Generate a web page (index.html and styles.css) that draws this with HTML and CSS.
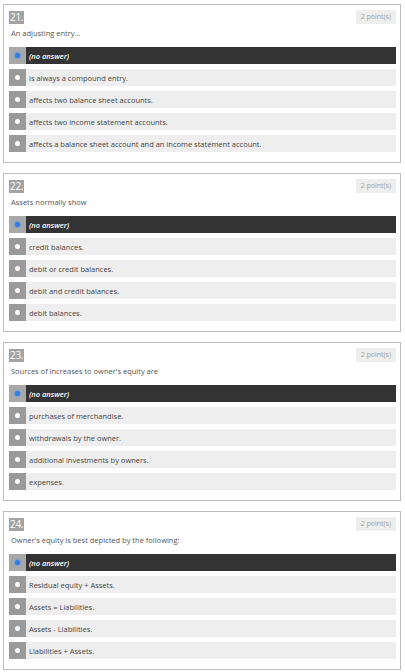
FILE: index.html
```html
<!DOCTYPE html>
<html>
<head>
<meta charset="utf-8">
<link rel="stylesheet" href="styles.css">
</head>
<body>
<div class="page">
  <div class="card">
    <div class="head"><span class="num">21.</span><span class="pts">2 point(s)</span></div>
    <div class="q">An adjusting entry...</div>
    <div class="opts">
      <div class="opt sel"><span class="ic"><span class="dot"></span></span><span class="tx">(no answer)</span></div>
      <div class="opt"><span class="ic"><span class="dot"></span></span><span class="tx">is always a compound entry.</span></div>
      <div class="opt"><span class="ic"><span class="dot"></span></span><span class="tx">affects two balance sheet accounts.</span></div>
      <div class="opt"><span class="ic"><span class="dot"></span></span><span class="tx">affects two income statement accounts.</span></div>
      <div class="opt"><span class="ic"><span class="dot"></span></span><span class="tx">affects a balance sheet account and an income statement account.</span></div>
    </div>
  </div>
  <div class="card">
    <div class="head"><span class="num">22.</span><span class="pts">2 point(s)</span></div>
    <div class="q">Assets normally show</div>
    <div class="opts">
      <div class="opt sel"><span class="ic"><span class="dot"></span></span><span class="tx">(no answer)</span></div>
      <div class="opt"><span class="ic"><span class="dot"></span></span><span class="tx">credit balances.</span></div>
      <div class="opt"><span class="ic"><span class="dot"></span></span><span class="tx">debit or credit balances.</span></div>
      <div class="opt"><span class="ic"><span class="dot"></span></span><span class="tx">debit and credit balances.</span></div>
      <div class="opt"><span class="ic"><span class="dot"></span></span><span class="tx">debit balances.</span></div>
    </div>
  </div>
  <div class="card">
    <div class="head"><span class="num">23.</span><span class="pts">2 point(s)</span></div>
    <div class="q">Sources of increases to owner's equity are</div>
    <div class="opts">
      <div class="opt sel"><span class="ic"><span class="dot"></span></span><span class="tx">(no answer)</span></div>
      <div class="opt"><span class="ic"><span class="dot"></span></span><span class="tx">purchases of merchandise.</span></div>
      <div class="opt"><span class="ic"><span class="dot"></span></span><span class="tx">withdrawals by the owner.</span></div>
      <div class="opt"><span class="ic"><span class="dot"></span></span><span class="tx">additional investments by owners.</span></div>
      <div class="opt"><span class="ic"><span class="dot"></span></span><span class="tx">expenses.</span></div>
    </div>
  </div>
  <div class="card">
    <div class="head"><span class="num">24.</span><span class="pts">2 point(s)</span></div>
    <div class="q">Owner's equity is best depicted by the following:</div>
    <div class="opts">
      <div class="opt sel"><span class="ic"><span class="dot"></span></span><span class="tx">(no answer)</span></div>
      <div class="opt"><span class="ic"><span class="dot"></span></span><span class="tx">Residual equity + Assets.</span></div>
      <div class="opt"><span class="ic"><span class="dot"></span></span><span class="tx">Assets = Liabilities.</span></div>
      <div class="opt"><span class="ic"><span class="dot"></span></span><span class="tx">Assets - Liabilities.</span></div>
      <div class="opt"><span class="ic"><span class="dot"></span></span><span class="tx">Liabilities + Assets.</span></div>
    </div>
  </div>
</div>
</body>
</html>
```
FILE: styles.css
```css
html, body {
  margin: 0;
  padding: 0;
  background: #fff;
}
body {
  font-family: "Open Sans", "Liberation Sans", sans-serif;
  color: #555;
}
.page {
  width: 398px;
  padding: 4px 0 0 3px;
  display: flex;
  flex-direction: column;
  gap: 10px;
}
.card {
  border: 1px solid #bdbdbd;
  padding: 5px 4px 10px 5px;
  height: 157px;
  box-sizing: border-box;
  height: 159px;
}
.head {
  display: flex;
  justify-content: space-between;
  align-items: flex-start;
  height: 14px;
}
.num {
  background: #a3a3a3;
  color: #fff;
  font-size: 10px;
  line-height: 13px;
  height: 13px;
  padding: 0 1px 0 1px;
  letter-spacing: -0.3px;
  margin-top: 1px;
}
.pts {
  background: #eeeeee;
  color: #a0a0a0;
  font-size: 7px;
  line-height: 14px;
  height: 14px;
  padding: 0 5px;
  margin-right: 0;
}
.q {
  margin-top: 3px;
  font-size: 7.5px;
  line-height: 12px;
  height: 12px;
  color: #555;
  padding-left: 2px;
}
.opts {
  margin-top: 8px;
  display: flex;
  flex-direction: column;
  gap: 5px;
}
.opt {
  display: flex;
  align-items: center;
  height: 17px;
  background: #eeeeee;
}
.ic {
  width: 17px;
  height: 17px;
  background: #9a9a9a;
  display: flex;
  align-items: center;
  justify-content: center;
  flex: none;
}
.dot {
  width: 5px;
  height: 5px;
  border-radius: 50%;
  background: #fff;
}
.tx {
  padding-left: 3px;
  font-size: 7.5px;
  color: #444;
  white-space: nowrap;
}
.opt.sel {
  background: #333333;
}
.opt.sel .ic {
  background: #a8a8a8;
}
.opt.sel .dot {
  background: #2f7be0;
  box-shadow: 0 0 1.5px 1px rgba(90, 150, 230, 0.6);
}
.opt.sel .tx {
  color: #fff;
  font-style: italic;
  font-weight: 600;
}
```
